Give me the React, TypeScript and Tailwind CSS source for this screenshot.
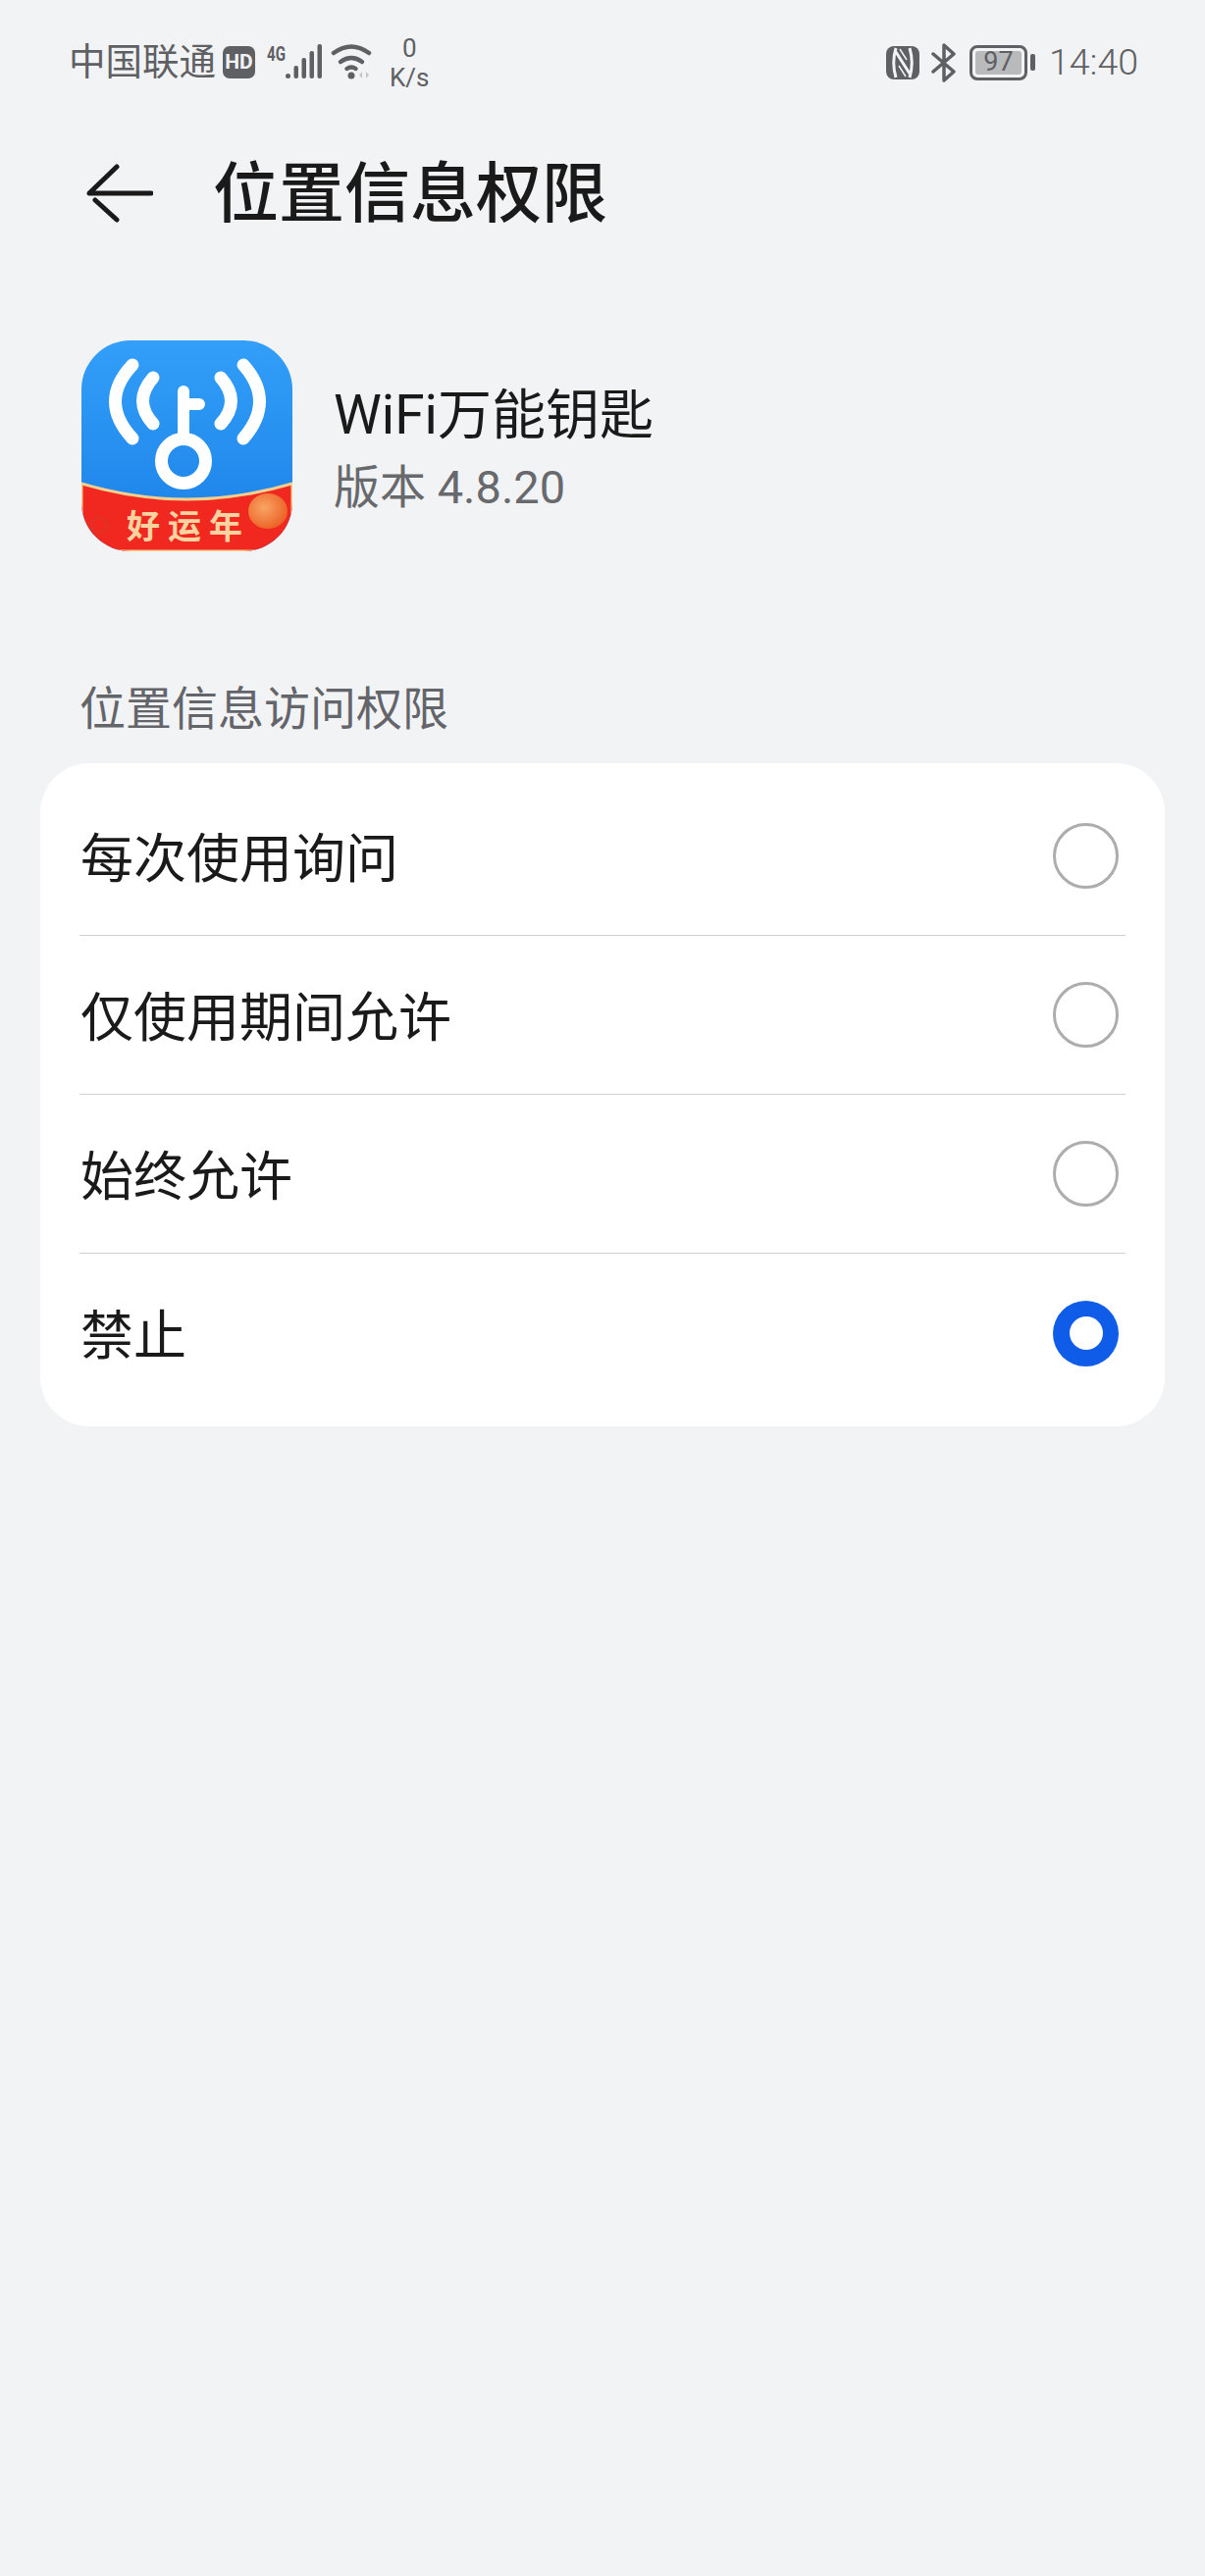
import React from "react";

const options = [
  { label: "每次使用询问", selected: false },
  { label: "仅使用期间允许", selected: false },
  { label: "始终允许", selected: false },
  { label: "禁止", selected: true },
];

const SignalIcon = () => (
  <svg width="60" height="40" viewBox="0 0 60 40" className="text-[#5f6063]">
    <text x="1" y="18" fontSize="20" fontWeight="700" fill="currentColor" textLength="19" lengthAdjust="spacingAndGlyphs">4G</text>
    <circle cx="22.5" cy="33.5" r="2.5" fill="currentColor" />
    <rect x="28.5" y="23" width="4.5" height="13" rx="2" fill="currentColor" />
    <rect x="36.5" y="15" width="4.5" height="21" rx="2" fill="currentColor" />
    <rect x="44.5" y="8" width="4.5" height="28" rx="2" fill="currentColor" />
    <rect x="52.5" y="1" width="4.5" height="35" rx="2" fill="currentColor" />
  </svg>
);

const WifiIcon = () => (
  <svg width="44" height="40" viewBox="0 0 44 40" fill="none" stroke="#5f6063" strokeLinecap="round" strokeWidth="4.5">
    <path d="M3 10Q21 -3 39 10" />
    <path d="M10 19Q21 11 32 19" />
    <path d="M16.5 26Q21 23 25.5 26" />
    <circle cx="21" cy="33" r="3.5" fill="#5f6063" stroke="none" />
    <path d="M32 29v7l-3-3.5zM36 29v7l3-3.5z" fill="#c4c5c8" stroke="none" />
  </svg>
);

const NfcIcon = () => (
  <svg width="34" height="34" viewBox="0 0 34 34">
    <rect width="34" height="34" rx="8" fill="#5f6063" />
    <path d="M10 2C7 12 7 22 10 32M10 6L24 28M24 2C27 12 27 22 24 32" fill="none" stroke="#f2f3f5" strokeWidth="3" />
    <path d="M14 3L21 14M13 20L20 31" fill="none" stroke="#f2f3f5" strokeWidth="1.5" />
  </svg>
);

const BluetoothIcon = () => (
  <svg width="26" height="40" viewBox="0 0 26 40" fill="none" stroke="#5f6063" strokeWidth="3.5" strokeLinejoin="round" strokeLinecap="round">
    <path d="M2 11L23 29L13 38V2L23 11L2 29" />
  </svg>
);

const KeyLogo = () => (
  <svg width="215" height="215" viewBox="0 0 215 215" className="rounded-[50px]">
    <defs>
      <linearGradient id="sky" x1="0" y1="0" x2="0" y2="1">
        <stop offset="0" stopColor="#339ff9" />
        <stop offset="1" stopColor="#1a80e6" />
      </linearGradient>
      <radialGradient id="lantern" cx="0.4" cy="0.4" r="0.7">
        <stop offset="0" stopColor="#f8a563" />
        <stop offset="1" stopColor="#ea5a20" />
      </radialGradient>
    </defs>
    <rect width="215" height="215" fill="url(#sky)" />
    <g fill="none" stroke="#fff" strokeLinecap="round">
      <path d="M52 25Q17 62 52 100" strokeWidth="13" />
      <path d="M165 25Q198 62 165 100" strokeWidth="13" />
      <path d="M73 38Q52 62 73 85" strokeWidth="13" />
      <path d="M142 38Q163 62 142 85" strokeWidth="13" />
      <circle cx="104" cy="123" r="22.5" strokeWidth="13" />
      <path d="M104 52V100M104 65H120" strokeWidth="12" />
    </g>
    <path d="M0 146Q107 178 215 146V215H0Z" fill="#f1281f" stroke="#f6cf8e" strokeWidth="3" />
    <ellipse cx="190" cy="174" rx="20" ry="18" fill="url(#lantern)" />
    <circle cx="18" cy="188" r="8" fill="none" stroke="#d8382c" strokeWidth="3" strokeDasharray="2 2" />
    <text x="109" y="202" textAnchor="middle" fontSize="34" fontWeight="700" fill="#fbd3a0" letterSpacing="8">好运年</text>
  </svg>
);

const Radio = ({ selected }: { selected: boolean }) =>
  selected ? (
    <div className="flex h-[67px] w-[67px] items-center justify-center rounded-full bg-[#0f5ce8]">
      <div className="h-[34px] w-[34px] rounded-full bg-white" />
    </div>
  ) : (
    <div className="h-[67px] w-[67px] rounded-full border-[3px] border-[#adadad]" />
  );

export default function App() {
  return (
    <div className="min-h-[2626px] bg-[#f2f3f5] font-['Roboto','Noto_Sans_CJK_SC',sans-serif]">
      {/* status bar */}
      <div className="flex h-[124px] items-center justify-between pl-[70px] pr-[68px] pt-[3px] text-[#5f6063]">
        <div className="flex items-center">
          <span className="text-[37.5px] leading-none">中国联通</span>
          <span className="ml-[7px] flex h-[33px] w-[33px] items-center justify-center rounded-[7px] bg-[#5f6063] text-[21px] font-bold text-[#f2f3f5]">HD</span>
          <div className="ml-[11px]"><SignalIcon /></div>
          <div className="ml-[6px]"><WifiIcon /></div>
          <div className="ml-[16px] flex flex-col items-center text-[26px] leading-[30px]">
            <span>0</span>
            <span>K/s</span>
          </div>
        </div>
        <div className="flex items-center">
          <NfcIcon />
          <div className="ml-[12px]"><BluetoothIcon /></div>
          <div className="ml-[13px] flex h-[36px] w-[59px] items-center justify-center rounded-[8px] border-[3px] border-[#5f6063] p-[3px]">
            <div className="flex h-full w-full items-center justify-center rounded-[3px] bg-[#b9babc] text-[27px] leading-none">97</div>
          </div>
          <div className="ml-[3px] h-[17px] w-[5px] rounded-[2px] bg-[#5f6063]" />
          <span className="ml-[14px] text-[37.5px] font-light leading-none">14:40</span>
        </div>
      </div>

      {/* header */}
      <div className="flex h-[146px] items-center pl-[88px]">
        <svg width="68" height="60" viewBox="0 0 68 60" fill="none" stroke="#1a1a1a" strokeWidth="5" strokeLinecap="round" strokeLinejoin="round">
          <path d="M66 30H3L31 3M9 37L31 57" />
        </svg>
        <h1 className="ml-[61px] pt-[3px] text-[67px] font-medium leading-none text-[#1a1a1a]">位置信息权限</h1>
      </div>

      {/* app info */}
      <div className="mt-[77px] flex items-center pl-[83px]">
        <KeyLogo />
        <div className="ml-[42px] flex flex-col pt-[11px]">
          <span className="text-[55px] leading-[74px] text-[#1a1a1a]">WiFi万能钥匙</span>
          <span className="text-[47px] leading-[74px] text-[#68696c]">版本 4.8.20</span>
        </div>
      </div>

      <div className="mt-[131px] pl-[81px] text-[47px] leading-[59px] text-[#63656a]">位置信息访问权限</div>

      {/* options */}
      <div className="mx-[41px] mt-[26px] rounded-[50px] bg-white px-[40px] py-[14px]">
        {options.map((option, index) => (
          <div
            key={option.label}
            className={`flex h-[162px] items-center justify-between pr-[7px] ${index < options.length - 1 ? "border-b border-[#d0d0d2]" : ""}`}
          >
            <span className="pl-[1px] pt-[8px] text-[54px] leading-none text-[#1a1a1a]">{option.label}</span>
            <Radio selected={option.selected} />
          </div>
        ))}
      </div>
    </div>
  );
}
